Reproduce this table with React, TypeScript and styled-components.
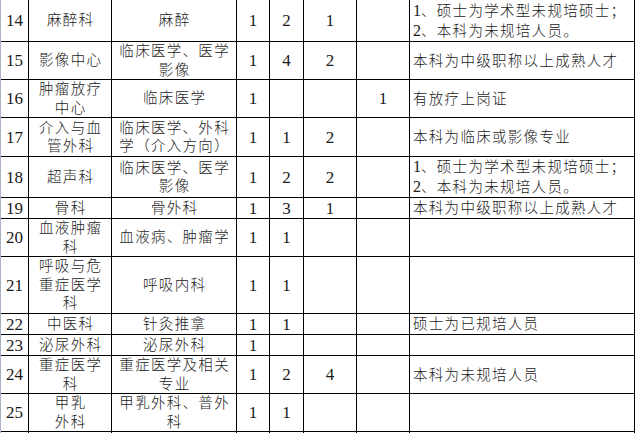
import styled, { createGlobalStyle } from "styled-components";

type Row = {
    no: string;
    dept: string;
    major: string;
    a: string;
    b: string;
    c: string;
    d: string;
    note: string;
    h: number;
};

const rows: Row[] = [
    { no: "14", dept: "麻醉科", major: "麻醉", a: "1", b: "2", c: "1", d: "", note: "1、硕士为学术型未规培硕士；\n2、本科为未规培人员。", h: 42 },
    { no: "15", dept: "影像中心", major: "临床医学、医学\n影像", a: "1", b: "4", c: "2", d: "", note: "本科为中级职称以上成熟人才", h: 38 },
    { no: "16", dept: "肿瘤放疗\n中心", major: "临床医学", a: "1", b: "", c: "", d: "1", note: "有放疗上岗证", h: 38 },
    { no: "17", dept: "介入与血\n管外科", major: "临床医学、外科\n学（介入方向）", a: "1", b: "1", c: "2", d: "", note: "本科为临床或影像专业", h: 39 },
    { no: "18", dept: "超声科", major: "临床医学、医学\n影像", a: "1", b: "2", c: "2", d: "", note: "1、硕士为学术型未规培硕士；\n2、本科为未规培人员。", h: 41 },
    { no: "19", dept: "骨科", major: "骨外科", a: "1", b: "3", c: "1", d: "", note: "本科为中级职称以上成熟人才", h: 21 },
    { no: "20", dept: "血液肿瘤\n科", major: "血液病、肿瘤学", a: "1", b: "1", c: "", d: "", note: "", h: 38 },
    { no: "21", dept: "呼吸与危\n重症医学\n科", major: "呼吸内科", a: "1", b: "1", c: "", d: "", note: "", h: 57 },
    { no: "22", dept: "中医科", major: "针灸推拿", a: "1", b: "1", c: "", d: "", note: "硕士为已规培人员", h: 21 },
    { no: "23", dept: "泌尿外科", major: "泌尿外科", a: "1", b: "", c: "", d: "", note: "", h: 21 },
    { no: "24", dept: "重症医学\n科", major: "重症医学及相关\n专业", a: "1", b: "2", c: "4", d: "", note: "本科为未规培人员", h: 38 },
    { no: "25", dept: "甲乳\n外科", major: "甲乳外科、普外\n科", a: "1", b: "1", c: "", d: "", note: "", h: 38 },
    { no: "", dept: "", major: "", a: "", b: "", c: "", d: "", note: "", h: 40 },
];

const colWidths = [28, 83, 125, 33, 34, 53, 53, 225];

const GlobalStyle = createGlobalStyle`
    html, body {
        margin: 0;
        padding: 0;
        background: #ffffff;
        overflow: hidden;
    }
`;

const Page = styled.div`
    width: 636px;
    height: 433px;
    overflow: hidden;
    background: #ffffff;
`;

const Table = styled.table`
    table-layout: fixed;
    width: 635px;
    margin-top: -1px;
    border-collapse: separate;
    border-spacing: 0;
    border-left: 1px solid #a9b1c6;
    border-top: 1px solid #000;
    color: #1a1a1a;
`;

const Tr = styled.tr<{ $h: number }>`
    height: ${(p) => p.$h}px;
`;

const Cell = styled.td`
    box-sizing: border-box;
    padding: 0;
    border-right: 1px solid #000;
    border-bottom: 1px solid #000;
    vertical-align: middle;
    overflow: hidden;
`;

const NumCell = styled(Cell)`
    text-align: center;
    font-family: "Liberation Serif", "Times New Roman", serif;
    font-size: 17px;
    line-height: 19px;
`;

const TextCell = styled(Cell)<{ $align?: "left" | "center" }>`
    text-align: ${(p) => p.$align ?? "center"};
    padding-left: ${(p) => (p.$align === "left" ? "3px" : "1.3px")};
    font-family: "Liberation Serif", "Noto Sans CJK SC", serif;
    font-size: 14.5px;
    font-weight: 300;
    letter-spacing: 1.3px;
    line-height: 18.5px;
    white-space: pre;
`;

const NoteCell = styled(TextCell)`
    line-height: 20px;
`;

const ListNum = styled.span`
    font-family: "Liberation Serif", "Times New Roman", serif;
    font-size: 16px;
    letter-spacing: 0;
`;

// "1、..." lines get a Times-sized list number, as in the source doc
const renderNote = (note: string) =>
    note.split("\n").map((line, i, all) => {
        const m = line.match(/^(\d+)(、.*)$/);
        return (
            <span key={i}>
                {m ? (
                    <>
                        <ListNum>{m[1]}</ListNum>
                        {m[2]}
                    </>
                ) : (
                    line
                )}
                {i < all.length - 1 ? "\n" : ""}
            </span>
        );
    });

export default function App() {
    return (
        <Page>
            <GlobalStyle />
            <Table>
                <colgroup>
                    {colWidths.map((w, i) => (
                        <col key={i} style={{ width: w }} />
                    ))}
                </colgroup>
                <tbody>
                    {rows.map((r, i) => (
                        <Tr key={i} $h={r.h}>
                            <NumCell>{r.no}</NumCell>
                            <TextCell>{r.dept}</TextCell>
                            <TextCell>{r.major}</TextCell>
                            <NumCell>{r.a}</NumCell>
                            <NumCell>{r.b}</NumCell>
                            <NumCell>{r.c}</NumCell>
                            <NumCell>{r.d}</NumCell>
                            <NoteCell $align="left">{renderNote(r.note)}</NoteCell>
                        </Tr>
                    ))}
                </tbody>
            </Table>
        </Page>
    );
}
